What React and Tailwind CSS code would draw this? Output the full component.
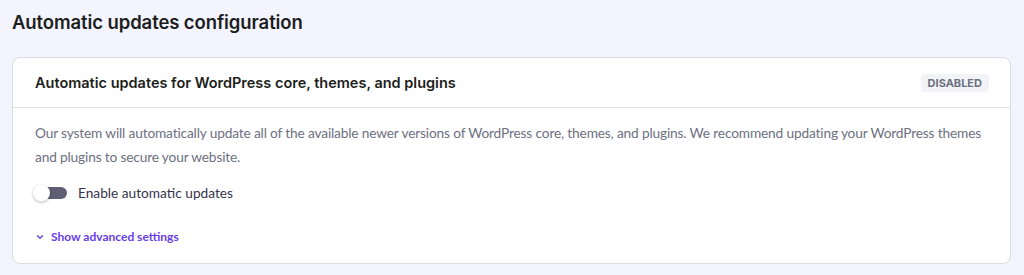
import React, { useState } from "react";

export default function App() {
  const [enabled, setEnabled] = useState(false);
  const [showAdvanced, setShowAdvanced] = useState(false);

  return (
    <div
      className="min-h-[275px] w-[1024px] bg-[#f4f4ff] px-3 pt-[10px] text-[#1d1e20]"
      style={{ fontFamily: "Inter, 'Noto Sans', sans-serif" }}
    >
      <h1 className="text-[18.5px] font-semibold leading-[24px] tracking-[-0.1px]">
        Automatic updates configuration
      </h1>

      <div className="mt-[23px] w-[999px] rounded-lg border border-[#dadce0] bg-white">
        <div className="flex h-[50px] items-center justify-between border-b border-[#e3e4e8] pl-[22px] pr-[21px]">
          <h2 className="text-[14.5px] font-semibold">
            Automatic updates for WordPress core, themes, and plugins
          </h2>
          <span className="rounded-[4px] bg-[#f2f3f6] px-[7px] py-[2px] text-[11px] font-bold leading-[14px] text-[#6d7081]">
            DISABLED
          </span>
        </div>

        <div className="pl-[22px] pr-[22px] pt-[13px] pb-[17px]" style={{ fontFamily: "Lato, 'Noto Sans', sans-serif" }}>
          <p className="text-[13.7px] leading-[24px] tracking-[-0.15px] text-[#6d7081]">
            Our system will automatically update all of the available newer versions of WordPress core, themes, and
            plugins. We recommend updating your WordPress themes and plugins to secure your website.
          </p>

          <label className="mt-[14px] flex cursor-pointer items-center gap-[11px]">
            <button
              type="button"
              onClick={() => setEnabled(!enabled)}
              className={`relative h-[12px] w-[32px] rounded-full ${enabled ? "bg-[#673de6]" : "bg-[#5f5e73]"}`}
            >
              <span
                className={`absolute top-1/2 -translate-y-1/2 h-[17px] w-[17px] rounded-full bg-white shadow-[0_1px_3px_rgba(0,0,0,0.3)] ${enabled ? "left-[16px]" : "-left-[2px]"}`}
              />
            </button>
            <span className="text-[13.7px] text-[#36344d]">Enable automatic updates</span>
          </label>

          <button
            type="button"
            onClick={() => setShowAdvanced(!showAdvanced)}
            className="mt-[24px] flex items-center gap-[6px] text-[12px] font-bold text-[#673de6]"
          >
            <svg width="10" height="10" viewBox="0 0 24 24" fill="none" stroke="currentColor" strokeWidth="3" strokeLinecap="round" strokeLinejoin="round" className={showAdvanced ? "rotate-180" : ""}>
              <path d="M6 9l6 6 6-6" />
            </svg>
            Show advanced settings
          </button>
        </div>
      </div>
    </div>
  );
}
